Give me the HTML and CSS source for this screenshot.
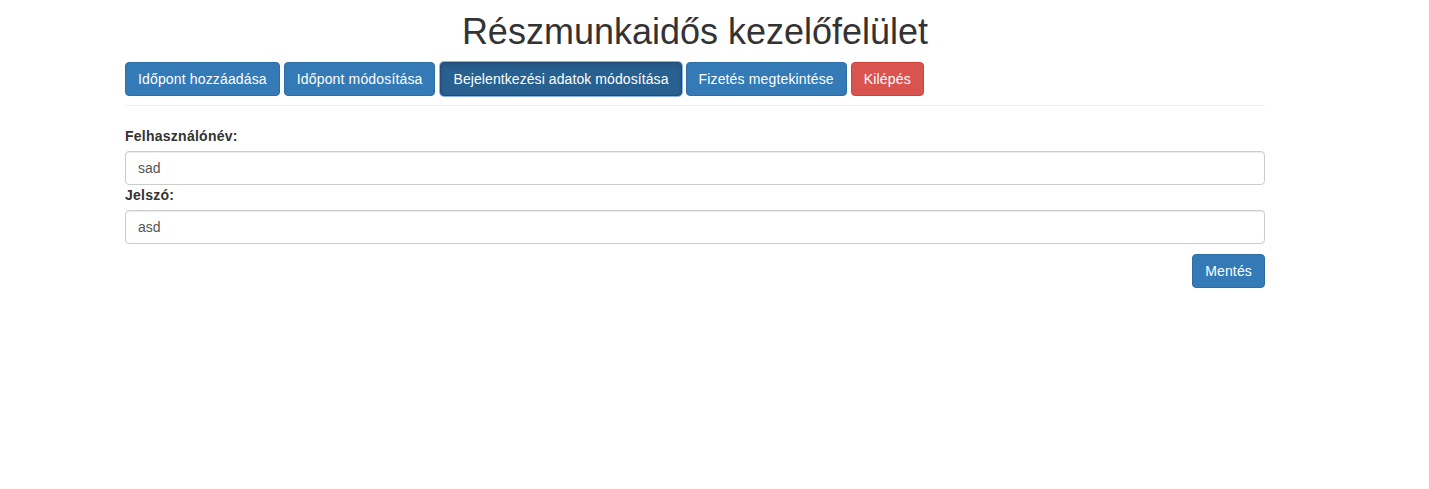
FILE: index.html
```html
<!DOCTYPE html>
<html lang="hu">
<head>
<meta charset="utf-8">
<title>Részmunkaidős kezelőfelület</title>
<link rel="stylesheet" href="styles.css">
</head>
<body>
<div class="container">
  <h1 class="title">Részmunkaidős kezelőfelület</h1>
  <div class="nav">
    <button class="btn btn-primary">Időpont hozzáadása</button>
    <button class="btn btn-primary">Időpont módosítása</button>
    <button class="btn btn-primary active">Bejelentkezési adatok módosítása</button>
    <button class="btn btn-primary">Fizetés megtekintése</button>
    <button class="btn btn-danger">Kilépés</button>
  </div>
  <hr class="divider">
  <form class="form">
    <label class="label" for="user">Felhasználónév:</label>
    <input class="control" id="user" type="text" value="sad">
    <label class="label" for="pass">Jelszó:</label>
    <input class="control" id="pass" type="text" value="asd">
    <div class="actions">
      <button type="button" class="btn btn-primary">Mentés</button>
    </div>
  </form>
</div>
</body>
</html>
```
FILE: styles.css
```css
* { box-sizing: border-box; }
html, body { margin: 0; padding: 0; background: #fff; }
body {
  font-family: "Liberation Sans", Arial, Helvetica, sans-serif;
  font-size: 14px;
  line-height: 1.42857143;
  color: #333;
}
.container {
  width: 1170px;
  margin-left: 110px;
  padding: 0 15px;
}
.title {
  font-size: 36px;
  font-weight: 500;
  line-height: 1.1;
  text-align: center;
  margin: 12px 0 10px;
  color: #333;
}
.nav {
  display: flex;
  gap: 4px;
}
.btn {
  display: inline-block;
  font-family: inherit;
  font-size: 14px;
  line-height: 20px;
  letter-spacing: 0.15px;
  padding: 6px 12px;
  border: 1px solid transparent;
  border-radius: 4px;
  color: #fff;
  cursor: pointer;
  white-space: nowrap;
}
.btn-primary { background: #337ab7; border-color: #2e6da4; }
.btn-primary.active {
  background: #286090;
  border-color: #204d74;
  letter-spacing: 0.08px;
  margin-left: 1px;
  box-shadow: 0 0 0 1px #8db4ec, inset 0 3px 5px rgba(0,0,0,.125);
}
.btn-danger { background: #d9534f; border-color: #d43f3a; }
.divider {
  border: 0;
  border-top: 1px solid #eee;
  margin: 9px 0 20px;
}
.form { display: flex; flex-direction: column; align-items: flex-start; }
.label {
  display: inline-block;
  font-weight: 700;
  letter-spacing: 0.25px;
  margin-bottom: 5px;
  max-width: 100%;
}
.control {
  display: block;
  width: 100%;
  height: 34px;
  padding: 6px 12px;
  font-family: inherit;
  font-size: 14px;
  line-height: 20px;
  color: #555;
  background: #fff;
  border: 1px solid #ccc;
  border-radius: 4px;
  box-shadow: inset 0 1px 1px rgba(0,0,0,.075);
}
.actions {
  align-self: stretch;
  display: flex;
  justify-content: flex-end;
  margin-top: 10px;
}
```
